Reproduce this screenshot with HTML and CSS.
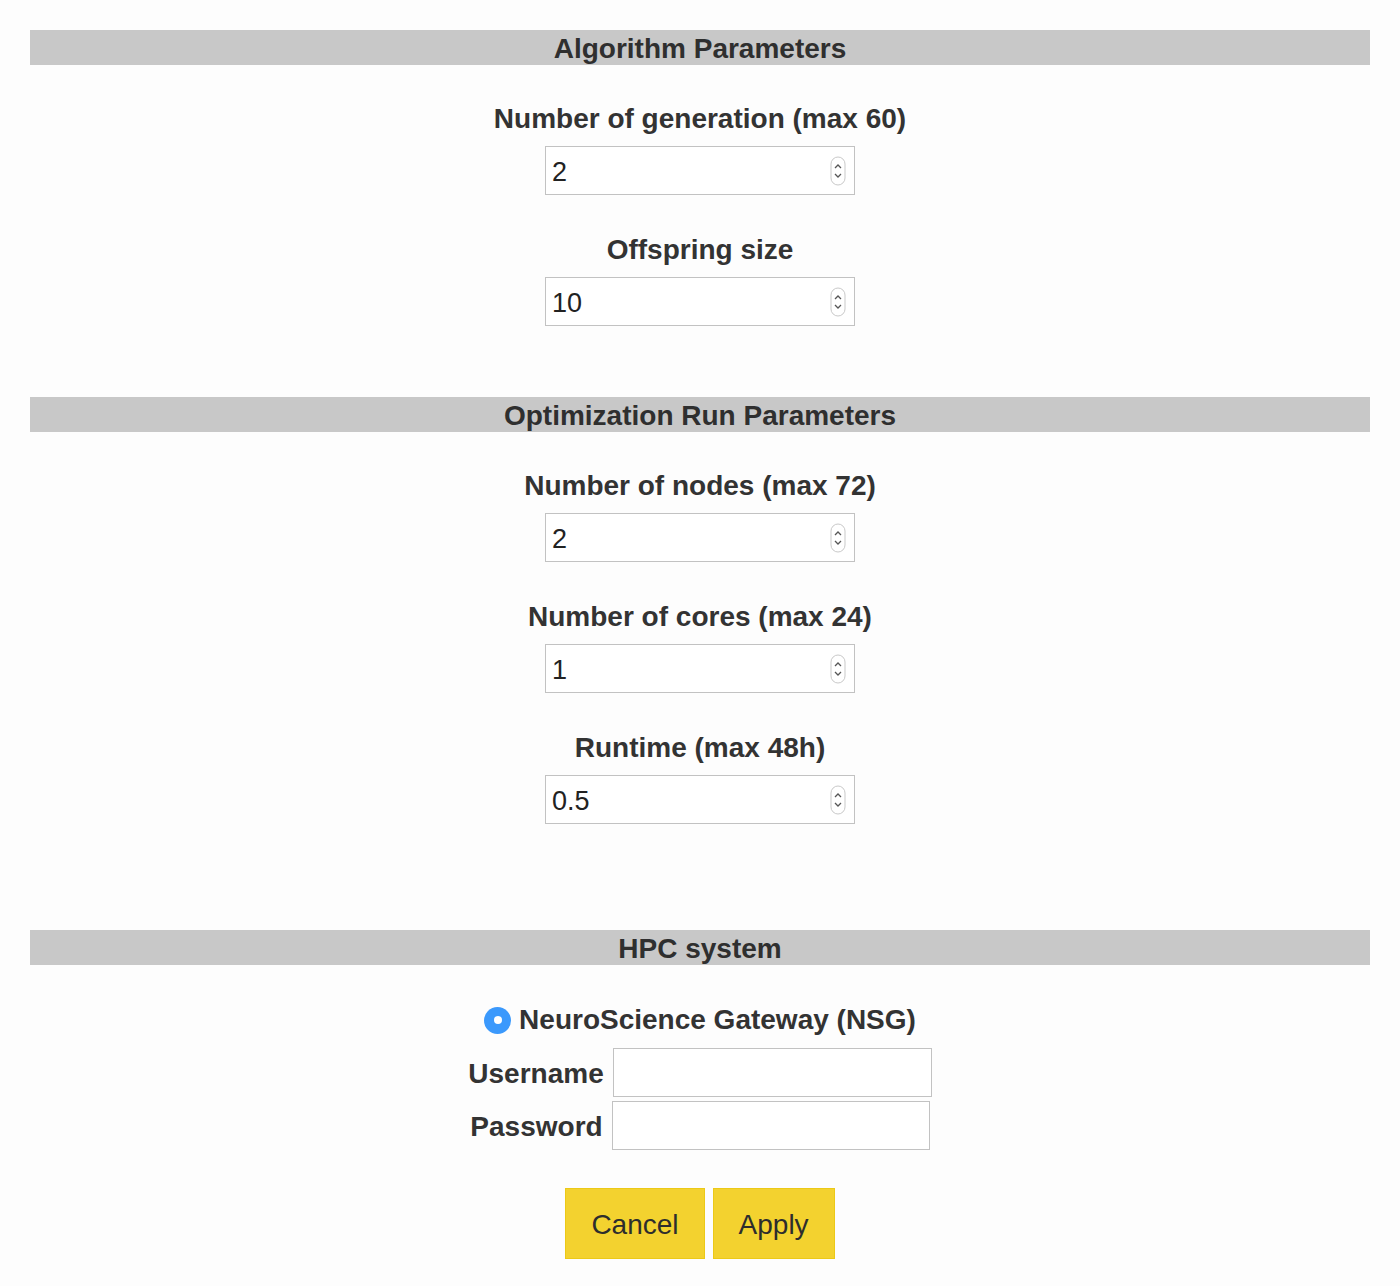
FILE: index.html
```html
<!DOCTYPE html>
<html>
<head>
<meta charset="utf-8">
<link rel="stylesheet" href="styles.css">
</head>
<body>
<div class="page">
  <div class="section-head first">Algorithm Parameters</div>
  <div class="field gap-a">
    <label class="field-label">Number of generation (max 60)</label>
    <div class="num-wrap">
      <input class="num-input" type="text" value="2">
      <svg class="spin" width="16" height="30" viewBox="0 0 16 30"><rect x="1" y="1" width="14" height="28" rx="7" fill="#fff" stroke="#c9c9c9"/><path d="M5 12 L8 9 L11 12" fill="none" stroke="#555" stroke-width="1.3"/><path d="M5 18 L8 21 L11 18" fill="none" stroke="#555" stroke-width="1.3"/></svg>
    </div>
  </div>
  <div class="field gap-b">
    <label class="field-label">Offspring size</label>
    <div class="num-wrap">
      <input class="num-input" type="text" value="10">
      <svg class="spin" width="16" height="30" viewBox="0 0 16 30"><rect x="1" y="1" width="14" height="28" rx="7" fill="#fff" stroke="#c9c9c9"/><path d="M5 12 L8 9 L11 12" fill="none" stroke="#555" stroke-width="1.3"/><path d="M5 18 L8 21 L11 18" fill="none" stroke="#555" stroke-width="1.3"/></svg>
    </div>
  </div>

  <div class="section-head second">Optimization Run Parameters</div>
  <div class="field gap-a">
    <label class="field-label">Number of nodes (max 72)</label>
    <div class="num-wrap">
      <input class="num-input" type="text" value="2">
      <svg class="spin" width="16" height="30" viewBox="0 0 16 30"><rect x="1" y="1" width="14" height="28" rx="7" fill="#fff" stroke="#c9c9c9"/><path d="M5 12 L8 9 L11 12" fill="none" stroke="#555" stroke-width="1.3"/><path d="M5 18 L8 21 L11 18" fill="none" stroke="#555" stroke-width="1.3"/></svg>
    </div>
  </div>
  <div class="field gap-b">
    <label class="field-label">Number of cores (max 24)</label>
    <div class="num-wrap">
      <input class="num-input" type="text" value="1">
      <svg class="spin" width="16" height="30" viewBox="0 0 16 30"><rect x="1" y="1" width="14" height="28" rx="7" fill="#fff" stroke="#c9c9c9"/><path d="M5 12 L8 9 L11 12" fill="none" stroke="#555" stroke-width="1.3"/><path d="M5 18 L8 21 L11 18" fill="none" stroke="#555" stroke-width="1.3"/></svg>
    </div>
  </div>
  <div class="field gap-b">
    <label class="field-label">Runtime (max 48h)</label>
    <div class="num-wrap">
      <input class="num-input" type="text" value="0.5">
      <svg class="spin" width="16" height="30" viewBox="0 0 16 30"><rect x="1" y="1" width="14" height="28" rx="7" fill="#fff" stroke="#c9c9c9"/><path d="M5 12 L8 9 L11 12" fill="none" stroke="#555" stroke-width="1.3"/><path d="M5 18 L8 21 L11 18" fill="none" stroke="#555" stroke-width="1.3"/></svg>
    </div>
  </div>

  <div class="section-head third">HPC system</div>
  <div class="radio-row">
    <span class="radio"><span class="radio-dot"></span></span>
    <span class="radio-label">NeuroScience Gateway (NSG)</span>
  </div>
  <div class="cred-row">
    <label class="cred-label">Username</label>
    <input class="cred-input" type="text">
  </div>
  <div class="cred-row cred-gap">
    <label class="cred-label">Password</label>
    <input class="cred-input pw" type="password">
  </div>
  <div class="buttons">
    <button class="btn">Cancel</button>
    <button class="btn">Apply</button>
  </div>
</div>
</body>
</html>
```

FILE: styles.css
```css
html, body {
  margin: 0;
  padding: 0;
  background: #fdfdfd;
}

body {
  font-family: "Liberation Sans", Arial, Helvetica, sans-serif;
  color: #333333;
  width: 1400px;
  height: 1286px;
  overflow: hidden;
}

.page {
  padding: 30px 30px 0 30px;
  display: flex;
  flex-direction: column;
  align-items: center;
}

.section-head {
  align-self: stretch;
  height: 35px;
  line-height: 37px;
  background: #c8c8c8;
  text-align: center;
  font-weight: bold;
  font-size: 28px;
  color: #2f2f2f;
}

.section-head.second {
  margin-top: 71px;
}

.section-head.third {
  margin-top: 106px;
}

.field {
  display: flex;
  flex-direction: column;
  align-items: center;
}

.field.gap-a {
  margin-top: 38px;
}

.field.gap-b {
  margin-top: 39px;
}

.field-label {
  font-weight: bold;
  font-size: 28px;
  line-height: 32px;
  height: 30px;
  margin-bottom: 13px;
}

.num-wrap {
  position: relative;
  width: 310px;
  height: 49px;
}

.num-input {
  box-sizing: border-box;
  width: 310px;
  height: 49px;
  border: 1px solid #c2c2c2;
  background: #ffffff;
  margin: 0;
  padding: 3px 0 0 6px;
  font-family: "Liberation Sans", Arial, Helvetica, sans-serif;
  font-size: 27px;
  color: #222;
  outline: none;
}

.spin {
  position: absolute;
  right: 9px;
  top: 10px;
}

.radio-row {
  margin-top: 41px;
  display: flex;
  align-items: center;
  gap: 8px;
  height: 28px;
}

.radio {
  width: 27px;
  height: 27px;
  border-radius: 50%;
  background: #3b99fc;
  display: flex;
  align-items: center;
  justify-content: center;
}

.radio-dot {
  width: 8px;
  height: 8px;
  border-radius: 50%;
  background: #fff;
}

.radio-label {
  font-weight: bold;
  font-size: 28px;
  line-height: 30px;
}

.cred-row {
  margin-top: 14px;
  display: flex;
  align-items: center;
  gap: 9px;
}

.cred-row.cred-gap {
  margin-top: 4px;
}

.cred-label {
  font-weight: bold;
  font-size: 28px;
  padding-top: 2px;
}

.cred-input {
  box-sizing: border-box;
  width: 319px;
  height: 49px;
  border: 1px solid #c2c2c2;
  background: #fff;
  margin: 0;
  outline: none;
}

.cred-input.pw {
  width: 318px;
}

.buttons {
  margin-top: 38px;
  display: flex;
  gap: 8px;
}

.btn {
  height: 71px;
  padding: 2px 25px 0 25px;
  background: #f3d22f;
  border: 1px solid #ecc917;
  font-family: "Liberation Sans", Arial, Helvetica, sans-serif;
  font-size: 28px;
  color: #2d2d2d;
  border-radius: 0;
  cursor: pointer;
}
```
